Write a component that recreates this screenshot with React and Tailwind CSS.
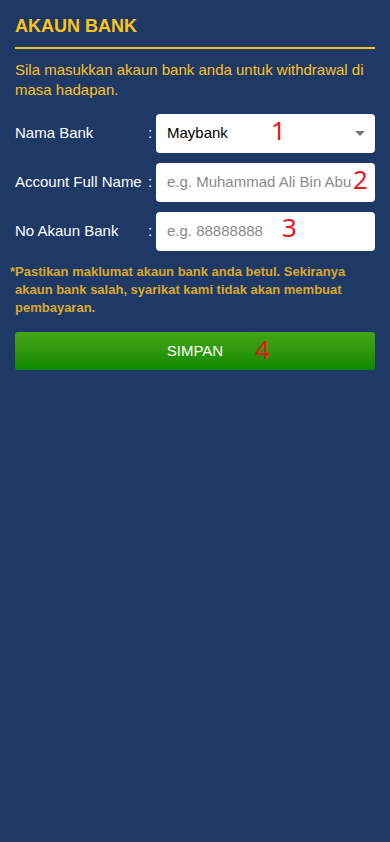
import React from "react";

function Row({ label, children }) {
  return (
    <div className="flex items-center h-[39px]">
      <div className="w-[133px] text-[15px] text-white">{label}</div>
      <div className="w-[8px] text-[15px] text-white">:</div>
      <div className="flex-1 relative h-full">{children}</div>
    </div>
  );
}

function Num({ children, className }) {
  return (
    <span
      className={"absolute text-[26px] leading-none text-[#e8161d] " + className}
      style={{ fontFamily: '"Noto Sans", sans-serif', fontWeight: 400 }}
    >
      {children}
    </span>
  );
}

export default function App() {
  return (
    <div
      className="w-[390px] h-[842px] bg-[#1e3966] px-[15px] pt-[15px]"
      style={{ fontFamily: '"Liberation Sans", Arial, sans-serif' }}
    >
      <div className="text-[18px] font-bold text-[#fcc419] leading-[22px]">AKAUN BANK</div>
      <div className="h-[2px] bg-[#fcc419] mt-[10px]" />
      <div className="mt-[11px] text-[15px] leading-[20px] text-[#fcc419]">
        Sila masukkan akaun bank anda untuk withdrawal di masa hadapan.
      </div>
      <div className="mt-[14px] flex flex-col gap-[10px]">
        <Row label="Nama Bank">
          <div className="h-full bg-white rounded-[4px] flex items-center pl-[11px] pr-[10px] text-[15px] text-black">
            <span className="flex-1">Maybank</span>
            <span className="w-0 h-0 border-l-[5px] border-r-[5px] border-t-[5px] border-l-transparent border-r-transparent border-t-[#777]" />
          </div>
          <Num className="left-[115px] top-[3px]">1</Num>
        </Row>
        <Row label="Account Full Name">
          <div className="h-full bg-white rounded-[4px] flex items-center pl-[11px] text-[15px] text-[#8a8a8a] overflow-hidden whitespace-nowrap">
            e.g. Muhammad Ali Bin Abu
          </div>
          <Num className="left-[197px] top-[3px]">2</Num>
        </Row>
        <Row label="No Akaun Bank">
          <div className="h-full bg-white rounded-[4px] flex items-center pl-[11px] text-[15px] text-[#8a8a8a]">
            e.g. 88888888
          </div>
          <Num className="left-[126px] top-[2px]">3</Num>
        </Row>
      </div>
      <div className="mt-[12px] -ml-[5px] text-[13px] font-bold leading-[18px] text-[#d9a92b]">
        <div>*Pastikan maklumat akaun bank anda betul. Sekiranya</div>
        <div className="pl-[5px]">akaun bank salah, syarikat kami tidak akan membuat</div>
        <div className="pl-[5px]">pembayaran.</div>
      </div>
      <button className="relative mt-[15px] w-full h-[38px] rounded-[3px] bg-gradient-to-b from-[#44a616] to-[#078900] text-white text-[15px] flex items-center justify-center">
        SIMPAN
        <Num className="left-[240px] top-[4px]">4</Num>
      </button>
    </div>
  );
}
